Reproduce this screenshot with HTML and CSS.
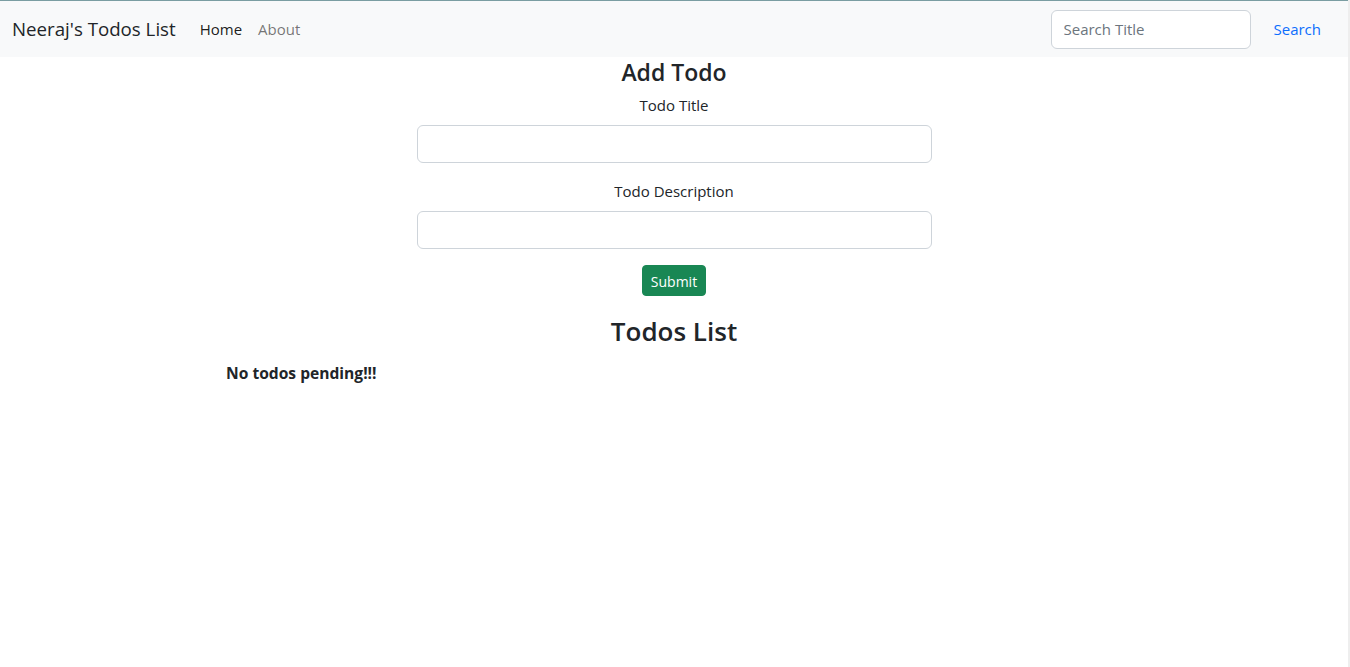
FILE: index.html
```html
<!DOCTYPE html>
<html lang="en">
<head>
<meta charset="utf-8">
<title>Neeraj's Todos List</title>
<link rel="stylesheet" href="styles.css">
</head>
<body>
<nav class="navbar">
  <div class="nav-left">
    <a class="brand" href="#">Neeraj's Todos List</a>
    <ul class="nav-links">
      <li><a class="nav-link active" href="#">Home</a></li>
      <li><a class="nav-link" href="#">About</a></li>
    </ul>
  </div>
  <form class="search-form">
    <input class="search-input" type="search" placeholder="Search Title">
    <button class="search-btn" type="button">Search</button>
  </form>
</nav>
<main class="main">
  <section class="add-todo">
    <h4 class="add-title">Add Todo</h4>
    <form class="todo-form">
      <div class="field">
        <label class="field-label" for="title">Todo Title</label>
        <input class="field-input" id="title" type="text">
      </div>
      <div class="field">
        <label class="field-label" for="desc">Todo Description</label>
        <input class="field-input" id="desc" type="text">
      </div>
      <button class="submit-btn" type="button">Submit</button>
    </form>
  </section>
  <section class="todos">
    <h3 class="todos-title">Todos List</h3>
    <p class="empty">No todos pending!!!</p>
  </section>
</main>
</body>
</html>
```
FILE: styles.css
```css
* { box-sizing: border-box; }
html, body { margin: 0; padding: 0; }
body {
  font-family: "Open Sans", "Noto Sans", sans-serif;
  font-size: 15px;
  line-height: 24px;
  color: #212529;
  background: #fff;
  border-right: 2px solid #eeeeee;
  min-height: 667px;
}
.navbar {
  display: flex;
  align-items: center;
  justify-content: space-between;
  height: 57px;
  background: #f8f9fa;
  border-top: 1px solid #7a9da2;
  padding: 0 14px 0 12px;
}
.nav-left { display: flex; align-items: center; }
.brand {
  font-size: 18.7px;
  color: #212529;
  text-decoration: none;
  margin-right: 16px;
  padding: 5px 0;
}
.nav-links { display: flex; list-style: none; margin: 0; padding: 0; }
.nav-link {
  display: block;
  padding: 8px;
  color: rgba(0,0,0,.55);
  text-decoration: none;
}
.nav-link.active { color: rgba(0,0,0,.9); }
.search-form { display: flex; align-items: center; gap: 10px; }
.search-input {
  width: 200px;
  height: 39px;
  padding: 6px 12px;
  font: inherit;
  color: #212529;
  background: #fff;
  border: 1px solid #ced4da;
  border-radius: 6px;
}
.search-input::placeholder { color: #6c757d; }
.search-btn {
  font: inherit;
  color: #0d6efd;
  background: transparent;
  border: 1px solid transparent;
  padding: 6px 12px;
  border-radius: 6px;
}
.main { width: 896px; margin: 0 auto; }
.add-todo { display: flex; flex-direction: column; align-items: center; }
.add-title {
  margin: 0 0 8px;
  padding-top: 2px;
  font-size: 23px;
  font-weight: 600;
  line-height: 26px;
}
.todo-form { width: 515px; display: flex; flex-direction: column; align-items: center; }
.field { width: 100%; margin-bottom: 16px; display: flex; flex-direction: column; align-items: center; }
.field-label { margin-bottom: 8px; }
.field-input {
  width: 100%;
  height: 38px;
  padding: 6px 12px;
  font: inherit;
  border: 1px solid #ced4da;
  border-radius: 6px;
  background: #fff;
}
.submit-btn {
  font: inherit;
  font-size: 14px;
  color: #fff;
  background: #198754;
  border: 1px solid #198754;
  border-radius: 4px;
  padding: 4px 8px;
  height: 31px;
}
.todos-title {
  margin: 19px 0 0;
  text-align: center;
  font-size: 26px;
  font-weight: 600;
  line-height: 32px;
}
.empty {
  margin: 14px 0 0;
  font-weight: 700;
  font-size: 15.6px;
}
```
